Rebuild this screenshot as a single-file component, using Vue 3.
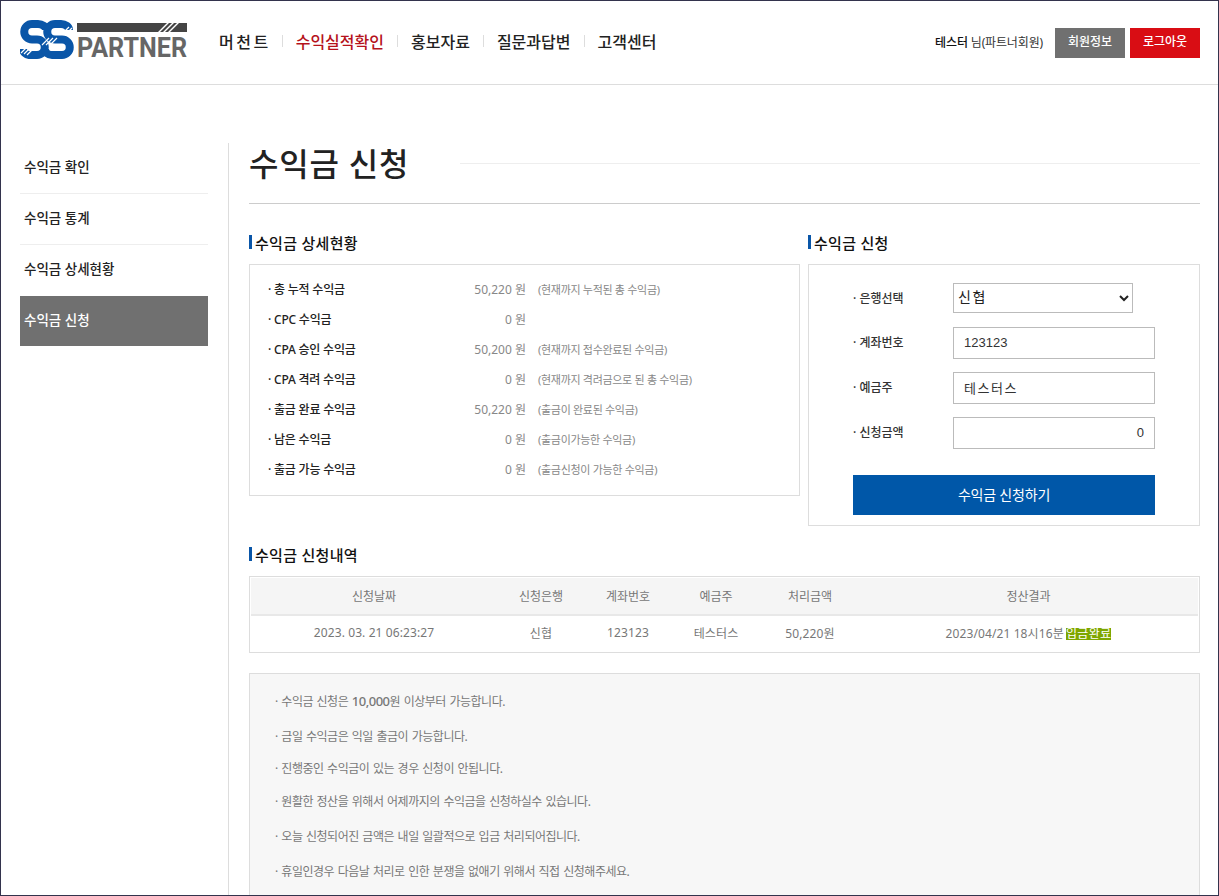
<template>
  <div class="page">
    <header class="top">
      <svg class="logo" width="180" height="44" viewBox="0 0 180 44">
        <g fill="none" stroke="#0a56a8" stroke-width="8">
          <path d="M26 10A8 6 0 0 0 18 4H12A7.500 7.500 0 0 0 12 19.500H17A7.500 7.500 0 0 1 17 35H9A7 6 0 0 1 3 29" />
          <path d="M49 10A8 6 0 0 0 41 4H35A7.500 7.500 0 0 0 35 19.500H42A7.500 7.500 0 0 1 42 35H32A7 6 0 0 1 25 29" />
        </g>
        <g stroke="#fff" stroke-width="1.2">
          <path d="M1 33 7 27M4 34 10 28M7 35 13 29" />
          <path d="M22 25 29 18M26 25 33 18M30 25 37 18" />
          <path d="M43 13 49 7M46 14 52 8M49 15 54 10" />
        </g>
        <polygon points="57,3 147,3 138,12 57,12" fill="#444" />
        <polygon points="149,3 152,3 143,12 140,12" fill="#444" />
        <polygon points="154,3 157,3 148,12 145,12" fill="#444" />
        <polygon points="159,3 167,3 167,12 150,12" fill="#444" />
        <text class="logo-text" x="57" y="37" textLength="110" lengthAdjust="spacingAndGlyphs">PARTNER</text>
      </svg>
      <nav class="gnb">
        <template v-for="(item, i) in navItems" :key="item">
          <span v-if="i > 0" class="gnb-sep"></span>
          <a class="gnb-item" :class="{ active: i === 1, wide: i === 0 }">{{ item }}</a>
        </template>
      </nav>
      <div class="user">
        <span class="user-name"><b>테스터</b> 님(파트너회원)</span>
        <a class="btn-top gray">회원정보</a>
        <a class="btn-top red">로그아웃</a>
      </div>
    </header>

    <div class="wrap">
      <aside class="side">
        <a v-for="(item, i) in sideItems" :key="item" class="side-item" :class="{ on: i === 3 }">{{ item }}</a>
      </aside>

      <main class="content">
        <div class="page-title">
          <h1>수익금 신청</h1>
          <span class="title-line"></span>
        </div>

        <div class="columns">
          <section class="col-left">
            <h2 class="sec-title">수익금 상세현황</h2>
            <div class="panel detail">
              <div v-for="row in detailRows" :key="row.label" class="detail-row">
                <span class="detail-label">· {{ row.label }}</span>
                <span class="detail-amount">{{ row.amount }} 원</span>
                <span class="detail-note">{{ row.note }}</span>
              </div>
            </div>
          </section>

          <section class="col-right">
            <h2 class="sec-title">수익금 신청</h2>
            <div class="panel form">
              <div class="form-row first">
                <label>· 은행선택</label>
                <select class="bank">
                  <option>신협</option>
                </select>
              </div>
              <div class="form-row">
                <label>· 계좌번호</label>
                <input type="text" value="123123" />
              </div>
              <div class="form-row">
                <label>· 예금주</label>
                <input class="spaced" type="text" value="테스터스" />
              </div>
              <div class="form-row">
                <label>· 신청금액</label>
                <input class="amount" type="text" value="0" />
              </div>
              <button class="submit">수익금 신청하기</button>
            </div>
          </section>
        </div>

        <h2 class="sec-title history-title">수익금 신청내역</h2>
        <div class="panel history">
          <table>
            <thead>
              <tr>
                <th class="c1">신청날짜</th>
                <th class="c2">신청은행</th>
                <th class="c3">계좌번호</th>
                <th class="c4">예금주</th>
                <th class="c5">처리금액</th>
                <th>정산결과</th>
              </tr>
            </thead>
            <tbody>
              <tr>
                <td>2023. 03. 21 06:23:27</td>
                <td>신협</td>
                <td>123123</td>
                <td>테스터스</td>
                <td>50,220원</td>
                <td>2023/04/21 18시16분 <span class="badge">입금완료</span></td>
              </tr>
            </tbody>
          </table>
        </div>

        <ul class="notes">
          <li>· 수익금 신청은 <b>10,000</b>원 이상부터 가능합니다.</li>
          <li>· 금일 수익금은 익일 출금이 가능합니다.</li>
          <li>· 진행중인 수익금이 있는 경우 신청이 안됩니다.</li>
          <li>· 원활한 정산을 위해서 어제까지의 수익금을 신청하실수 있습니다.</li>
          <li>· 오늘 신청되어진 금액은 내일 일괄적으로 입금 처리되어집니다.</li>
          <li>· 휴일인경우 다음날 처리로 인한 분쟁을 없애기 위해서 직접 신청해주세요.</li>
        </ul>
      </main>
    </div>
  </div>
</template>

<script setup>
const navItems = ['머천트', '수익실적확인', '홍보자료', '질문과답변', '고객센터']
const sideItems = ['수익금 확인', '수익금 통계', '수익금 상세현황', '수익금 신청']
const detailRows = [
  { label: '총 누적 수익금', amount: '50,220', note: '(현재까지 누적된 총 수익금)' },
  { label: 'CPC 수익금', amount: '0', note: '' },
  { label: 'CPA 승인 수익금', amount: '50,200', note: '(현재까지 접수완료된 수익금)' },
  { label: 'CPA 격려 수익금', amount: '0', note: '(현재까지 격려금으로 된 총 수익금)' },
  { label: '출금 완료 수익금', amount: '50,220', note: '(출금이 완료된 수익금)' },
  { label: '남은 수익금', amount: '0', note: '(출금이가능한 수익금)' },
  { label: '출금 가능 수익금', amount: '0', note: '(출금신청이 가능한 수익금)' }
]
</script>

<style>
html, body {
  margin: 0;
  background: #fff;
}
</style>

<style scoped>
.page {
  box-sizing: border-box;
  height: 896px;
  overflow: hidden;
  border: 1px solid #33334d;
  background: #fff;
  color: #222;
  font-family: "Noto Sans", "Noto Sans CJK KR", sans-serif;
}

.top {
  display: flex;
  align-items: center;
  height: 83px;
  padding: 0 18px 0 19px;
  border-bottom: 1px solid #ddd;
}

.logo {
  flex: none;
  margin-top: -1px;
}

.logo-text {
  font-family: Roboto, sans-serif;
  font-weight: 700;
  font-size: 27px;
  fill: #666;
}

.gnb {
  display: flex;
  align-items: center;
  margin: 0 0 4px 19px;
}

.gnb-item {
  font-size: 16px;
  font-weight: 500;
  color: #222;
}

.gnb-item.wide {
  margin-right: -2px;
  letter-spacing: 2.5px;
}

.gnb-item.active {
  color: #b5121b;
}

.gnb-sep {
  width: 1px;
  height: 12px;
  margin: 0 13px;
  background: #ddd;
}

.user {
  display: flex;
  align-items: center;
  margin-left: auto;
}

.user-name {
  margin: 0 12px 2px 0;
  font-size: 12px;
  letter-spacing: -0.15px;
  color: #333;
}

.user-name b {
  font-weight: 500;
  color: #111;
}

.btn-top {
  width: 70px;
  height: 30px;
  line-height: 28px;
  text-align: center;
  font-size: 12px;
  font-weight: 500;
  color: #fff;
}

.btn-top.gray {
  background: #707070;
}

.btn-top.red {
  margin-left: 5px;
  background: #d90d14;
}

.wrap {
  display: flex;
  margin-top: 58px;
  padding: 0 18px 0 19px;
}

.side {
  flex: none;
  width: 188px;
  margin-right: 20px;
}

.side-item {
  display: block;
  box-sizing: border-box;
  height: 51px;
  padding-left: 4px;
  line-height: 49px;
  font-size: 13.5px;
  font-weight: 500;
  color: #222;
  border-bottom: 1px solid #eee;
}

.side-item:nth-child(3) {
  border-bottom: 0;
}

.side-item.on {
  height: 50px;
  line-height: 49px;
  background: #707070;
  color: #fff;
  border-bottom: 0;
}

.content {
  flex: 1;
  min-width: 0;
  min-height: 800px;
  padding-left: 20px;
  border-left: 1px solid #ddd;
}

.page-title {
  display: flex;
  align-items: center;
  height: 42px;
  padding-bottom: 18px;
  border-bottom: 1px solid #ccc;
}

.page-title h1 {
  margin: 0;
  font-size: 32px;
  font-weight: 500;
  line-height: 42px;
  letter-spacing: 0.8px;
  color: #222;
}

.title-line {
  flex: 1;
  height: 1px;
  margin: -2px 0 0 51px;
  background: #eee;
}

.columns {
  display: flex;
  gap: 8px;
  align-items: flex-start;
  margin-top: 29px;
}

.col-left {
  width: 551px;
}

.col-right {
  width: 392px;
}

.sec-title {
  display: flex;
  align-items: center;
  box-sizing: border-box;
  height: 20px;
  margin: 0 0 11px;
  padding: 0 0 2px 6px;
  font-size: 15px;
  font-weight: 500;
  letter-spacing: 0.3px;
  color: #111;
  background: linear-gradient(#0a56a8, #0a56a8) no-repeat 0 2px / 3px 14px;
}

.history-title {
  margin-top: 19px;
}

.panel {
  box-sizing: border-box;
  border: 1px solid #ddd;
  background: #fff;
}

.detail {
  height: 232px;
  padding: 9px 0 0 18px;
}

.detail-row {
  display: flex;
  align-items: center;
  height: 30px;
  font-size: 12px;
}

.detail-label {
  width: 206px;
  font-weight: 500;
  letter-spacing: -0.2px;
  color: #222;
}

.detail-amount {
  width: 52px;
  text-align: right;
  white-space: nowrap;
  color: #888;
}

.detail-note {
  margin-left: 12px;
  font-size: 11px;
  letter-spacing: -0.3px;
  color: #888;
}

.form {
  height: 262px;
  padding: 18px 44px 0;
}

.form-row {
  display: flex;
  align-items: center;
  margin-bottom: 13px;
}

.form-row.first {
  margin-bottom: 14px;
}

.form-row label {
  width: 100px;
  margin-top: -3px;
  font-size: 12px;
  font-weight: 500;
  color: #333;
}

.form-row.first label {
  margin-top: -1px;
}

.bank {
  box-sizing: border-box;
  width: 180px;
  height: 30px;
  padding: 0 0 3px;
  border: 1px solid #bbb;
  border-radius: 0;
  background: #fff;
  color: #222;
  font-family: inherit;
  font-size: 14px;
  letter-spacing: 1.5px;
}

.form-row input {
  box-sizing: border-box;
  width: 202px;
  height: 32px;
  padding: 0 10px 2px;
  border: 1px solid #bbb;
  color: #333;
  font-family: "Liberation Sans", "Noto Sans CJK KR", sans-serif;
  font-size: 13px;
}

.form-row input.spaced {
  letter-spacing: 1.5px;
}

.form-row input.amount {
  text-align: right;
}

.submit {
  display: block;
  width: 302px;
  height: 40px;
  margin-top: 26px;
  padding: 0 0 2px;
  border: 0;
  background: #0057a8;
  color: #fff;
  font-family: inherit;
  font-size: 14px;
  font-weight: 400;
  letter-spacing: -0.2px;
}

.history {
  padding: 1px;
}

table {
  width: 100%;
  table-layout: fixed;
  border-collapse: collapse;
  font-size: 12px;
  color: #777;
}

th {
  height: 36px;
  padding: 0;
  font-weight: 400;
  background: #f5f5f5;
  border-bottom: 2px solid #e8e8e8;
}

td {
  height: 33px;
  padding: 0 0 2px;
  text-align: center;
  letter-spacing: 0.1px;
}

.c1 { width: 246px; }
.c2 { width: 88px; }
.c3 { width: 86px; }
.c4 { width: 90px; }
.c5 { width: 98px; }

.badge {
  display: inline-block;
  margin-left: -1px;
  line-height: 12px;
  letter-spacing: 0.3px;
  background: #7ea600;
  color: #fff;
}

.notes {
  box-sizing: border-box;
  height: 300px;
  margin: 20px 0 0;
  padding: 18px 25px 0;
  list-style: none;
  border: 1px solid #ddd;
  background: #f7f7f7;
  font-size: 12px;
  letter-spacing: -0.5px;
  word-spacing: 1px;
  color: #777;
}

.notes li {
  height: 20px;
  line-height: 20px;
  margin-bottom: 15px;
}

.notes li:first-child {
  margin-top: -1px;
  margin-bottom: 16px;
}

.notes li:nth-child(2) { margin-bottom: 12px; }
.notes li:nth-child(3) { margin-bottom: 13px; }

.notes b {
  font-weight: 500;
  font-size: 13px;
}
</style>
